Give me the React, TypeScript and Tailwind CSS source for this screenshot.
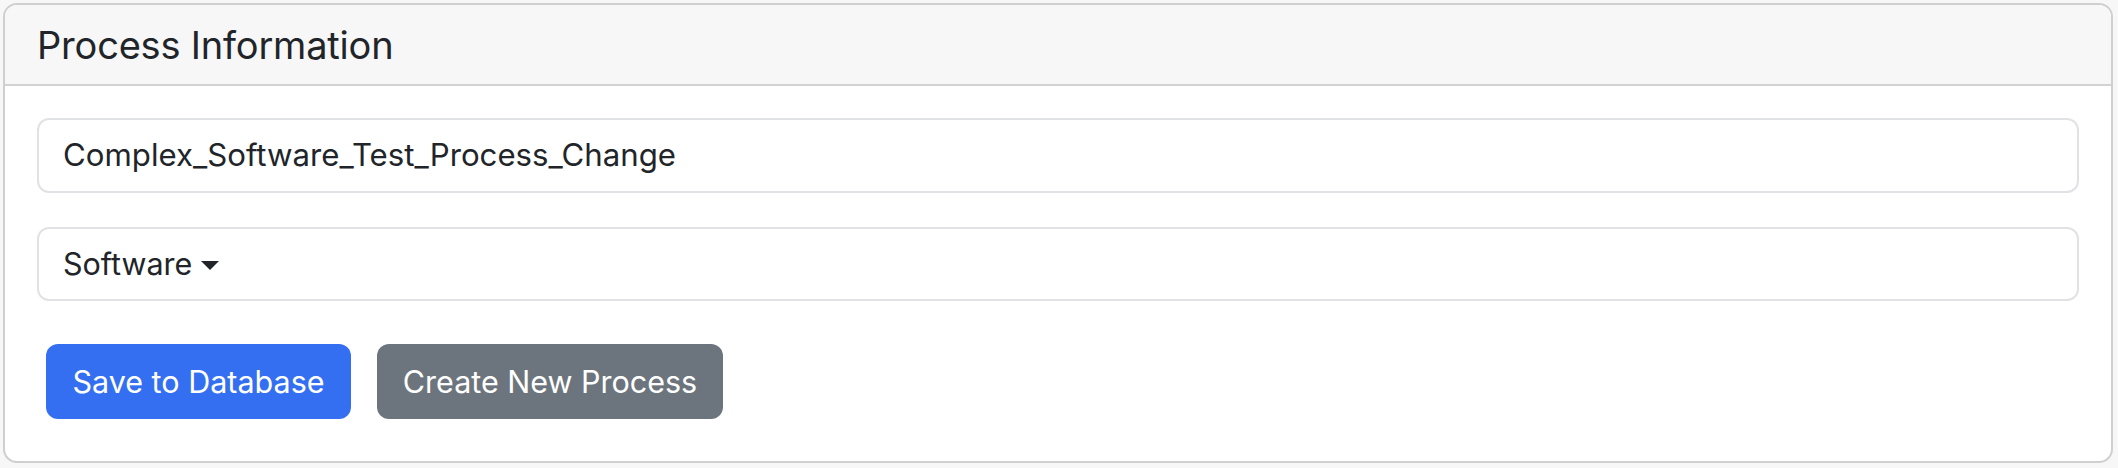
import React from "react";

export default function App() {
  return (
    <div
      className="w-[2118px] h-[468px] bg-[#f7f7f7] pt-[3px] pl-[3px] overflow-hidden"
      style={{ fontFamily: "Inter, 'Noto Sans', sans-serif" }}
    >
      <div className="w-[2110px] h-[460px] bg-white border-2 border-[#cfcfcf] rounded-[14px] overflow-hidden flex flex-col">
        <div className="h-[81px] bg-[#f7f7f7] border-b-2 border-[#d2d2d2] flex items-center pl-[32px]">
          <h5 className="text-[38px] text-[#212529] leading-none tracking-[-0.2px]">Process Information</h5>
        </div>
        <div className="pt-[32px] px-[32px] flex flex-col">
          <div className="h-[75px] border-2 border-[#e0e2e5] rounded-[12px] flex items-center px-[24px] text-[31.2px] text-[#212529]">
            Complex_Software_Test_Process_Change
          </div>
          <div className="mt-[34px] h-[74px] border-2 border-[#e0e2e5] rounded-[12px] flex items-center px-[24px] text-[30.5px] text-[#212529]">
            <span>Software</span>
            <span className="ml-[9px] mt-[2px] w-0 h-0 border-t-[9px] border-t-[#212529] border-x-[9px] border-x-transparent"></span>
          </div>
          <div className="mt-[43px] ml-[9px] flex gap-[26px]">
            <button className="w-[305px] h-[75px] rounded-[12px] bg-[#346ff2] text-white text-[30.5px] flex items-center justify-center">
              Save to Database
            </button>
            <button className="w-[346px] h-[75px] rounded-[12px] bg-[#6c757d] text-white text-[30.5px] flex items-center justify-center">
              Create New Process
            </button>
          </div>
        </div>
      </div>
    </div>
  );
}
